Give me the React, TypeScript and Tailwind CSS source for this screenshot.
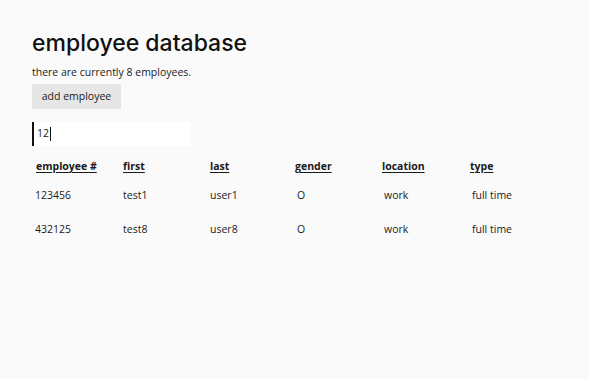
import React from 'react';

interface Employee {
  id: string;
  first: string;
  last: string;
  gender: string;
  location: string;
  type: string;
}

const employees: Employee[] = [
  { id: '123456', first: 'test1', last: 'user1', gender: 'O', location: 'work', type: 'full time' },
  { id: '432125', first: 'test8', last: 'user8', gender: 'O', location: 'work', type: 'full time' },
];

const headers = [
  { label: 'employee #', pad: 'pl-[4px]' },
  { label: 'first', pad: 'pl-[4px]' },
  { label: 'last', pad: 'pl-[4px]' },
  { label: 'gender', pad: 'pl-[2px]' },
  { label: 'location', pad: 'pl-[2px]' },
  { label: 'type', pad: 'pl-[3px]' },
];

const cellPads = ['pl-[3px]', 'pl-[4px]', 'pl-[4px]', 'pl-[4px]', 'pl-[4px]', 'pl-[5px]'];

export default function App() {
  return (
    <div className="min-h-[379px] bg-[#fafafa] px-8 pt-[27px] text-[#1a1a1a]" style={{ fontFamily: '"Open Sans", sans-serif' }}>
      <h1 className="text-[23px] font-medium leading-[32px] text-[#111]" style={{ fontFamily: 'Inter, sans-serif' }}>
        employee database
      </h1>
      <p className="mt-[5px] text-[10.5px] leading-[16px]">there are currently 8 employees.</p>
      <button className="mt-[4px] block h-[25px] w-[89px] bg-[#e6e6e6] text-[10.5px] text-[#1a1a1a]">add employee</button>

      <div className="mt-[13px] flex h-[24px] w-[159px] items-center border-l-2 border-[#111] bg-white pl-[3px] text-[10.5px]">
        12<span className="ml-[1px] inline-block h-[14px] w-px bg-[#111]" />
      </div>

      {/* Table */}
      <div className="mt-[12px] grid grid-cols-[repeat(6,87px)] text-[10.5px]">
        {headers.map(h => (
          <div key={h.label} className={`${h.pad} font-bold leading-[16px]`}>
            <span className="underline underline-offset-2">{h.label}</span>
          </div>
        ))}
        {employees.map(e => (
          <React.Fragment key={e.id}>
            {[e.id, e.first, e.last, e.gender, e.location, e.type].map((v, i) => (
              <div key={i} className={`${cellPads[i]} pt-[13px] pb-[5px] leading-[16px]`}>{v}</div>
            ))}
          </React.Fragment>
        ))}
      </div>
    </div>
  );
}
